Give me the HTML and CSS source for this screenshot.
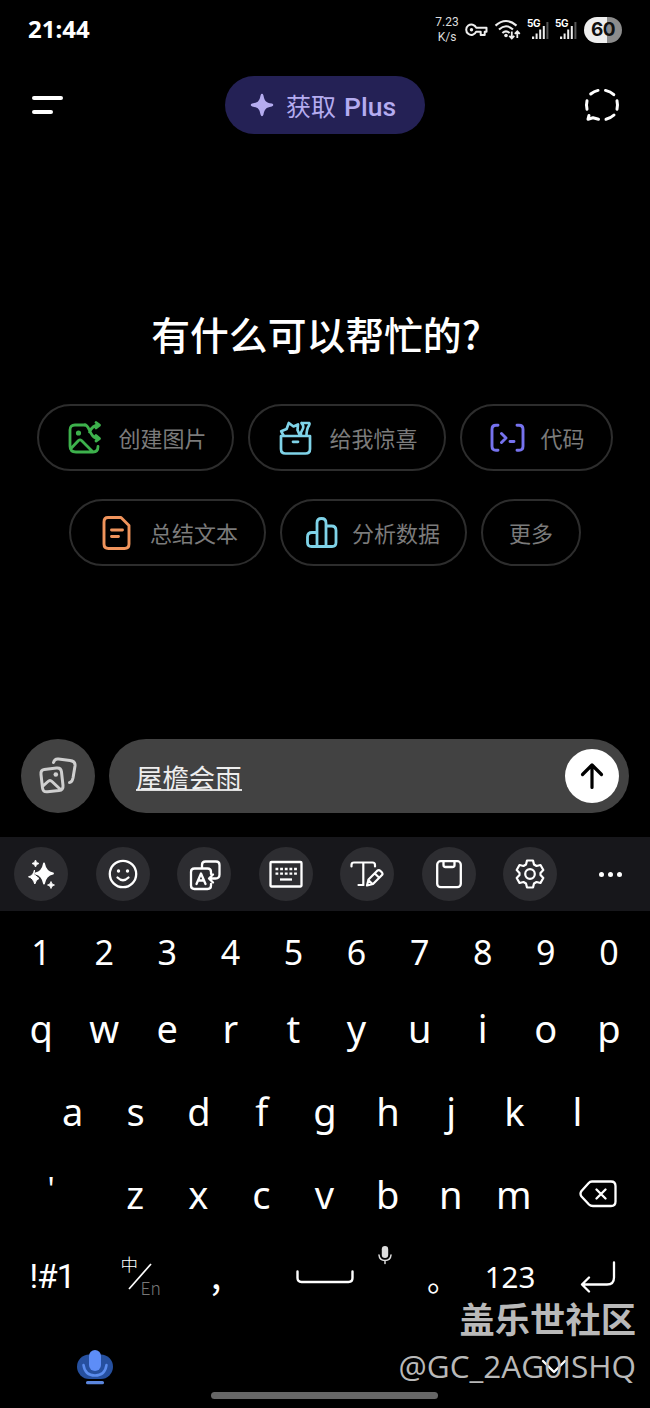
FILE: index.html
```html
<!DOCTYPE html>
<html lang="zh-CN">
<head>
    <meta charset="UTF-8">
    <meta name="viewport" content="width=device-width, initial-scale=1.0">
    <title>有什么可以帮忙的?</title>
    <link rel="stylesheet" href="styles.css">
</head>
<body>
    <!-- status bar -->
    <div class="status">
        <span class="clock">21:44</span>
        <div class="status_icons">
            <div class="speed"><span>7.23</span><span>K/s</span></div>
            <svg class="key_icon" width="24" height="16" viewBox="0 0 24 16" fill="none" stroke="#eee" stroke-width="2" stroke-linejoin="round">
                <path d="M12.2 5.7H22.5V9.7H20.7V13H16.7V9.7H12.2A5.2 5.2 0 1 1 12.2 5.7Z"/>
                <circle cx="7.5" cy="7.7" r="1.7" fill="#eee" stroke="none"/>
            </svg>
            <svg class="wifi" width="27" height="22" viewBox="0 0 27 22" fill="none" stroke="#eee" stroke-width="2.1">
                <path d="M1.5 6.6Q12 -2.6 22.5 6.6M5 10.5Q12 4 19 10.5M8.4 14Q12 10.6 15.6 14"/>
                <circle cx="12" cy="16.5" r="1.8" fill="#eee" stroke="none"/>
                <path stroke-width="1.8" d="M17.8 12.5V19M15.3 16.8L17.8 19.4L20.3 16.8M23.3 19V12.5M20.8 14.9L23.3 12.3L25.8 14.9"/>
            </svg>
            <div class="signal">
                <span>5G</span>
                <svg width="22" height="20" viewBox="0 0 22 20" fill="#eee">
                    <path d="M5 16.5h2.2v2.5H5zM8.6 13.5h2v5.5h-2zM12.2 9.5h2v9.5h-2zM15.8 6h2v13h-2z"/>
                    <path fill="#555" d="M19.4 2h2v17h-2z"/>
                </svg>
            </div>
            <div class="signal">
                <span>5G</span>
                <svg width="22" height="20" viewBox="0 0 22 20" fill="#eee">
                    <path d="M5 16.5h2.2v2.5H5zM8.6 13.5h2v5.5h-2zM12.2 9.5h2v9.5h-2zM15.8 6h2v13h-2z"/>
                    <path fill="#555" d="M19.4 2h2v17h-2z"/>
                </svg>
            </div>
            <div class="battery">60</div>
        </div>
    </div>

    <div class="header">
        <div class="menu"><i></i><i></i></div>
        <div class="plus">
            <svg width="24" height="24" viewBox="0 0 24 24" fill="#b5acf0">
                <path d="M12 .8Q13 .8 13.4 2.2C14.7 8.3 15.7 9.3 21.8 10.6Q23.3 11 23.3 12Q23.3 13 21.8 13.4C15.7 14.7 14.7 15.7 13.4 21.8Q13 23.2 12 23.2Q11 23.2 10.6 21.8C9.3 15.7 8.3 14.7 2.2 13.4Q.7 13 .7 12Q.7 11 2.2 10.6C8.3 9.3 9.3 8.3 10.6 2.2Q11 .8 12 .8Z"/>
            </svg>
            <span class="plus_cn">获取</span><span class="plus_en">Plus</span>
        </div>
        <svg class="temp_chat" width="36" height="34" viewBox="0 0 36 34" fill="none" stroke="#fff" stroke-width="3" stroke-linecap="round" stroke-linejoin="round">
            <path d="M6.7 6Q10 3.2 14 2.4M21.5 2.4Q26.500 3.500 29.800 6.600M33 12.800Q34 17 33 21.200M30 27Q26.500 30.200 22 31.300M3 12.800Q2 17 3 21.200M5 27.500L4 31.200L9 29.800L14.500 31.300"/>
        </svg>
    </div>

    <div class="main">
        <h1>有什么可以帮忙的?</h1>
        <div class="chips">
            <div class="chip">
                <svg width="36" height="36" viewBox="0 0 36 36" fill="none" stroke="#3db14c" stroke-width="2.8" stroke-linecap="round" stroke-linejoin="round">
                    <path d="M18 5H8Q3 5 3 10V26Q3 32 9 32H26Q31 32 31 26.5M3.5 29L11.500 20.500Q13 19.300 14.500 20.500L25.500 31.500"/>
                    <circle cx="11.5" cy="13" r="1.2" fill="#3db14c"/>
                    <path d="M18 5C23 5 22 18.500 32 18.500M22.500 12Q25.500 5 32 5M29 2.500L32.500 5.200L29 8M29 15.500L32.500 18.500L29 21"/>
                </svg>
                <span>创建图片</span>
            </div>
            <div class="chip">
                <svg width="36" height="36" viewBox="0 0 36 36" fill="none" stroke="#7fd3e8" stroke-width="2.7" stroke-linecap="round" stroke-linejoin="round">
                    <path d="M3 16H32V29Q32 33.500 27.500 33.500H7.500Q3 33.500 3 29ZM15 21.800H20"/>
                    <path d="M5.500 15.500L3.200 11.300L8.600 9L10.800 3L15.500 6.500L20 4.500L19.500 10L21.500 14.500M23.500 3H31Q32 3.500 31 5.500Q28.500 9 28.500 15.500M23.500 3Q26.500 6.500 24.500 9.500Q22.500 12 23 15.500"/>
                </svg>
                <span>给我惊喜</span>
            </div>
            <div class="chip">
                <svg width="36" height="36" viewBox="0 0 36 36" fill="none" stroke="#7672ee" stroke-width="2.9" stroke-linecap="round" stroke-linejoin="round">
                    <path d="M8 5.300H6Q2 5.300 2 9.300V26.200Q2 30.200 6 30.200H8M27 5.300H29Q33 5.300 33 9.300V26.200Q33 30.200 29 30.200H27M11.500 13.500L16 18L11.500 22.500M20 21.500H24"/>
                </svg>
                <span>代码</span>
            </div>
        </div>
        <div class="chips">
            <div class="chip">
                <svg width="36" height="36" viewBox="0 0 36 36" fill="none" stroke="#f0945c" stroke-width="2.9" stroke-linecap="round" stroke-linejoin="round">
                    <path d="M9 2.500H22L30 10.500V29Q30 33.500 25.500 33.500H9.500Q5 33.500 5 29V7Q5 2.500 9 2.500ZM12.500 15H23.500M12.500 21.500H19.500"/>
                </svg>
                <span>总结文本</span>
            </div>
            <div class="chip narrow">
                <svg width="36" height="36" viewBox="0 0 36 36" fill="none" stroke="#7fd3e8" stroke-width="2.8" stroke-linejoin="round">
                    <path d="M13 31.500V8Q13 3.500 17.500 3.500Q22 3.500 22 8V31.500M13 17.500H8Q3.500 17.500 3.500 22V27.500Q3.500 31.500 7.500 31.500H28Q32 31.500 32 27.500V15.500Q32 11 27.500 11H22"/>
                </svg>
                <span>分析数据</span>
            </div>
            <div class="chip more"><span>更多</span></div>
        </div>
    </div>

    <div class="composer">
        <div class="photo">
            <svg width="40" height="40" viewBox="0 0 40 40" fill="none" stroke="#cfcfcf" stroke-width="3" stroke-linecap="round" stroke-linejoin="round">
                <path d="M6.200 13.400L18.500 12Q23 11.500 23.500 16L25 29.500Q25.500 34 21 34.500L9.500 35.800Q5 36.300 4.500 31.800L3 18.500Q2.500 13.800 6.200 13.400ZM5 30L10 25.500Q12 23.500 14 25.500L22.500 33.500"/>
                <path d="M15.500 6.500Q16.500 2.500 20.500 3L32 4.500Q37.500 5.200 37 10L35 22Q34 26.500 31.500 26.500"/>
                <circle cx="17.800" cy="18.500" r="2.300" fill="#cfcfcf" stroke="none"/>
            </svg>
        </div>
        <div class="input">
            <span class="typed">屋檐会雨</span>
            <div class="send">
                <svg width="30" height="30" viewBox="0 0 30 30" fill="none" stroke="#000" stroke-width="3.2" stroke-linecap="round" stroke-linejoin="round">
                    <path d="M15 26.500V4M5.500 13.500L15 4L24.500 13.500"/>
                </svg>
            </div>
        </div>
    </div>

    <div class="toolbar">
        <div class="tool">
            <svg width="34" height="34" viewBox="0 0 34 34" fill="#fff">
                <path d="M20 6.500Q21.500 15 29 16.500Q21.500 18 20 26.500Q18.500 18 11.500 16.500Q18.500 15 20 6.500Z" stroke="#fff" stroke-width="1.800" stroke-linejoin="round"/>
                <path d="M10.500 13Q9.500 18.500 4.500 19.800Q9 21 10.800 27Q12 22.500 15 21.500L10 17.500Z" stroke="#fff"/>
                <path d="M11.500 3Q12 6 15 6.500Q12 7 11.500 10Q11 7 8 6.500Q11 6 11.500 3ZM27 24.500Q27.500 27.500 30.500 28Q27.500 28.500 27 31.500Q26.500 28.500 23.500 28Q26.500 27.500 27 24.500Z" stroke="#fff" stroke-width=".8"/>
            </svg>
        </div>
        <div class="tool">
            <svg width="34" height="34" viewBox="0 0 34 34" fill="none" stroke="#fff" stroke-width="2.300" stroke-linecap="round">
                <circle cx="17" cy="17" r="13.200"/>
                <path d="M11.500 20.500Q17 26 22.500 20.500"/>
                <circle cx="12.500" cy="14" r="1.700" fill="#fff" stroke="none"/>
                <circle cx="21.500" cy="14" r="1.700" fill="#fff" stroke="none"/>
            </svg>
        </div>
        <div class="tool">
            <svg width="34" height="34" viewBox="0 0 34 34" fill="none" stroke="#fff" stroke-width="2.300" stroke-linecap="round" stroke-linejoin="round">
                <path d="M24 17V15Q24 11.500 20.500 11.500H7.500Q4 11.500 4 15V28.500Q4 32 7.500 32H20.500Q24 32 24 28.500V27M15 11V8Q15 4.500 18.500 4.500H29Q32.500 4.500 32.500 8V17.500Q32.500 21.500 28.500 21.500H22.500M26 17.500L22 21.500L26 25.500"/>
                <path d="M9.500 27L14 16.500L18.500 27M11 23.500H17"/>
            </svg>
        </div>
        <div class="tool">
            <svg width="34" height="34" viewBox="0 0 34 34" fill="none" stroke="#fff" stroke-width="2.300">
                <rect x="1.500" y="5" width="31" height="24.500" rx="1"/>
                <path d="M6.500 12H28M6.500 16.700H28" stroke-dasharray="2.800 1.850"/>
                <path d="M11 22.500H23"/>
            </svg>
        </div>
        <div class="tool">
            <svg width="34" height="34" viewBox="0 0 34 34" fill="none" stroke="#fff" stroke-width="2.200" stroke-linecap="round" stroke-linejoin="round">
                <path d="M1.500 9.500V8Q1.500 5.500 4 5.500H22.500Q25 5.500 25 8V9.500M13.300 5.500V28M8.500 28H13.500M18.500 22.500L27.500 13.500Q29 12.500 30.500 14L32 15.500Q33 17 32 18L23 27L17 28.500ZM24.800 16.500L29 20.500M18.300 23L22.500 27"/>
            </svg>
        </div>
        <div class="tool">
            <svg width="34" height="34" viewBox="0 0 34 34" fill="none" stroke="#fff" stroke-width="2.300" stroke-linejoin="round">
                <rect x="5.200" y="4.200" width="23.600" height="26" rx="3.500"/>
                <path d="M11.500 4.200V8Q11.500 10 13.500 10H20.500Q22.500 10 22.500 8V4.200"/>
            </svg>
        </div>
        <div class="tool">
            <svg width="34" height="34" viewBox="0 0 34 34" fill="none" stroke="#fff" stroke-width="2.200" stroke-linejoin="round">
                <path d="M14 3.500H20L21 7.500L23.500 9L27.500 8L30.300 13L27.500 16V18L30.300 21L27.500 26L23.500 25L21 26.500L20 30.500H14L13 26.500L10.500 25L6.500 26L3.700 21L6.500 18V16L3.700 13L6.500 8L10.500 9L13 7.500Z"/>
                <circle cx="17" cy="17" r="4.800"/>
            </svg>
        </div>
        <div class="tool dots"><i></i><i></i><i></i></div>
    </div>

    <!-- keyboard -->
    <div class="keyboard">
        <div class="row digits">
            <b>1</b><b>2</b><b>3</b><b>4</b><b>5</b><b>6</b><b>7</b><b>8</b><b>9</b><b>0</b>
        </div>
        <div class="row">
            <b>q</b><b>w</b><b>e</b><b>r</b><b>t</b><b>y</b><b>u</b><b>i</b><b>o</b><b>p</b>
        </div>
        <div class="row tall">
            <b>a</b><b>s</b><b>d</b><b>f</b><b>g</b><b>h</b><b>j</b><b>k</b><b>l</b>
        </div>
        <div class="row third">
            <b class="quote">'</b><b>z</b><b>x</b><b>c</b><b>v</b><b>b</b><b>n</b><b>m</b>
            <b class="del">
                <svg width="38" height="30" viewBox="0 0 38 30" fill="none" stroke="#fff" stroke-width="2.300" stroke-linecap="round" stroke-linejoin="round">
                    <path d="M13 2.500H32Q36.500 2.500 36.500 7V22.500Q36.500 27 32 27H14Q11.500 27 10 25.500L2.500 17.500Q.5 14.800 2.500 12L9.500 4.200Q11 2.500 13 2.500M17.500 10.500L26.500 19.500M26.500 10.500L17.500 19.500"/>
                </svg>
            </b>
        </div>
        <div class="row tall fourth">
            <b class="sym">!#1</b>
            <b class="lang">
                <span class="zh">中</span>
                <svg width="24" height="27" viewBox="0 0 24 27" stroke="#fff" stroke-width="1.700"><path d="M1 26L23 1"/></svg>
                <span class="en">En</span>
            </b>
            <b class="comma">,</b>
            <b class="space">
                <svg width="60" height="18" viewBox="0 0 60 18" fill="none" stroke="#fff" stroke-width="2.400" stroke-linecap="round">
                    <path d="M2.500 3.500V10Q2.500 14 6.500 14H53.500Q57.500 14 57.500 10V3.500"/>
                </svg>
                <svg class="mic_small" width="16" height="20" viewBox="0 0 16 20" fill="none" stroke="#ddd" stroke-width="1.500" stroke-linecap="round">
                    <rect x="4.800" y="1" width="6.400" height="12" rx="3.200" fill="#ddd" stroke="none"/>
                    <path d="M2 10Q2.500 15.500 8 15.500Q13.500 15.500 14 10M8 15.500V18.500"/>
                </svg>
            </b>
            <b class="stop">。</b>
            <b class="num">123</b>
            <b>
                <svg width="38" height="34" viewBox="0 0 38 34" fill="none" stroke="#fff" stroke-width="2.300" stroke-linecap="round" stroke-linejoin="round">
                    <path d="M35 2.500V17.500Q35 24.500 28 24.500H3M10 17.500L3 24.500L10 31.500"/>
                </svg>
            </b>
        </div>
    </div>

    <div class="nav">
        <svg class="mic" width="38" height="36" viewBox="0 0 38 36" fill="none">
            <rect x="1" y="5.500" width="36" height="24.500" rx="12.200" fill="#26509f"/>
            <path d="M7.500 16Q9 26.500 19 26.500Q29 26.500 30.500 16" stroke="#5b8def" stroke-width="2.500" stroke-linecap="round"/>
            <rect x="13" y="1" width="12" height="21" rx="6" fill="#5d8df7"/>
            <rect x="10" y="32" width="18" height="3.300" rx="1.600" fill="#5b86dd"/>
        </svg>
        <svg class="down" width="28" height="18" viewBox="0 0 28 18" fill="none" stroke="#fff" stroke-width="2.400" stroke-linecap="round" stroke-linejoin="round">
            <path d="M3 3L14 14L25 3"/>
        </svg>
    </div>
    <div class="home_bar"></div>

    <div class="watermark">
        <div class="wm_title">盖乐世社区</div>
        <div class="wm_user">@GC_2AG0ISHQ</div>
    </div>
</body>
</html>
```
FILE: styles.css
```css
*{
    padding: 0px;
    margin: 0px;
    box-sizing: border-box;
}
body{
    position: relative;
    width: 650px;
    height: 1408px;
    overflow: hidden;
    background: #000;
    color: #fff;
    font-family: "Noto Sans", "Noto Sans CJK SC", sans-serif;
}
svg{
    display: block;
    flex: none;
}

/* status bar */
.status{
    height: 60px;
    padding: 0 28px;
    display: flex;
    align-items: center;
    justify-content: space-between;
}
.clock{
    font-size: 24px;
    font-weight: 700;
    padding-bottom: 3px;
}
.status_icons{
    display: flex;
    align-items: center;
}
.speed{
    width: 26px;
    font: 12px/15px Roboto, sans-serif;
    text-align: center;
    color: #ddd;
}
.speed span{
    display: block;
}
.key_icon{
    margin-left: 4px;
}
.wifi{
    margin-left: 6px;
}
.signal{
    position: relative;
    width: 22px;
    margin-left: 6px;
}
.signal + .signal{
    margin-left: 6px;
}
.signal span{
    position: absolute;
    left: 0;
    top: -2px;
    font: 700 10px/11px Inter, sans-serif;
    letter-spacing: -.5px;
}
.battery{
    width: 38px;
    height: 26px;
    margin-left: 7px;
    border-radius: 13px;
    background: linear-gradient(90deg, #eee 60%, #8c8c8c 60%);
    color: #111;
    font: 700 19px/26px Inter, sans-serif;
    letter-spacing: -.5px;
    text-align: center;
}

/* header */
.header{
    height: 90px;
    padding: 0 30px 0 32px;
    display: flex;
    align-items: center;
    justify-content: space-between;
}
.menu{
    width: 34px;
}
.menu i{
    display: block;
    width: 31px;
    height: 4px;
    border-radius: 2px;
    background: #fff;
}
.menu i + i{
    width: 21px;
    margin-top: 10px;
}
.plus{
    width: 200px;
    height: 58px;
    padding-left: 25px;
    border-radius: 29px;
    background: #242155;
    color: #b5acf0;
    display: flex;
    align-items: center;
}
.plus_cn{
    margin: 0 8px 0 12px;
    font: 25px/36px "Noto Sans CJK SC", sans-serif;
}
.plus_en{
    font: 500 26.500px/36px Roboto, sans-serif;
    padding-top: 4px;
}

/* greeting and suggestions */
.main{
    height: 589px;
    padding-top: 155px;
}
h1{
    height: 57px;
    margin-bottom: 42px;
    padding-right: 18px;
    text-align: center;
    font: 500 38.800px/57px "Noto Sans CJK SC", sans-serif;
}
.chips{
    display: flex;
    justify-content: center;
    gap: 14px;
    margin-bottom: 28px;
}
.chip{
    height: 67px;
    padding: 0 26px 0 28px;
    border: 2px solid #2d2d2d;
    border-radius: 34px;
    display: flex;
    align-items: center;
    gap: 15px;
    color: #7b7b7b;
    font: 22px/32px "Noto Sans CJK SC", sans-serif;
}
.chip span{
    padding-bottom: 1px;
}
.chip.narrow{
    padding: 0 25px 0 22px;
    gap: 12px;
}
.chip.more{
    padding: 0 26px;
}

/* message field */
.composer{
    height: 98px;
    padding: 0 21px;
    display: flex;
    gap: 14px;
}
.photo{
    width: 74px;
    height: 74px;
    border-radius: 50%;
    background: #424242;
    display: flex;
    align-items: center;
    justify-content: center;
}
.input{
    flex: 1;
    height: 74px;
    padding: 0 10px 0 27px;
    border-radius: 37px;
    background: #424242;
    display: flex;
    align-items: center;
    justify-content: space-between;
}
.typed{
    height: 29px;
    border-bottom: 2px solid #ddd;
    color: #eee;
    font: 26.400px/30px "Noto Sans CJK SC", sans-serif;
}
.send{
    width: 54px;
    height: 54px;
    border-radius: 50%;
    background: #fff;
    display: flex;
    align-items: center;
    justify-content: center;
}

/* keyboard toolbar */
.toolbar{
    height: 74px;
    padding: 0 11px 0 14px;
    background: #17171b;
    display: flex;
    align-items: center;
    justify-content: space-between;
}
.tool{
    width: 54px;
    height: 54px;
    border-radius: 50%;
    background: #2d2d31;
    display: flex;
    align-items: center;
    justify-content: center;
}
.tool.dots{
    background: none;
    gap: 4px;
    padding-right: 2px;
}
.dots i{
    width: 5px;
    height: 5px;
    border-radius: 50%;
    background: #fff;
}

/* keyboard */
.keyboard{
    height: 410px;
}
.row{
    height: 77px;
    padding: 0 9.500px;
    display: flex;
    justify-content: center;
    font-size: 38px;
}
.row b{
    width: 63.100px;
    display: flex;
    align-items: center;
    justify-content: center;
    font-weight: 400;
    line-height: 1;
}
.row.digits{
    height: 78px;
    padding-top: 3px;
    font-size: 34px;
}
.row.tall{
    height: 89px;
}
.row .quote{
    width: 83px;
    margin-right: 11px;
    padding-bottom: 10px;
    font-size: 32px;
}
.row .del{
    width: 84px;
    margin-left: 11px;
}
.fourth{
    display: grid;
    grid-template-columns: 85px 91px 61px 157px 61px 91px 85px;
}
.row.fourth b{
    width: auto;
}
.fourth .sym{
    font: 33.500px/1 Roboto, sans-serif;
    letter-spacing: -1px;
}
.fourth .num{
    font-size: 29.500px;
    padding-top: 1px;
}
.fourth .comma{
    font: 38px/1 "Noto Sans CJK SC", sans-serif;
    padding-bottom: 7px;
}
.fourth .lang{
    position: relative;
}
.lang span{
    position: absolute;
    left: 26px;
    top: 23px;
    font: 300 17.500px/18px "Noto Sans CJK SC", sans-serif;
}
.lang .en{
    left: 46px;
    top: 47px;
    color: #777;
}
.fourth .space{
    position: relative;
}
.mic_small{
    position: absolute;
    right: 11px;
    top: 13px;
}
.fourth .stop{
    font: 32px/1 "Noto Sans CJK SC", sans-serif;
    padding-left: 18px;
}

/* bottom */
.nav{
    height: 71px;
    padding: 21px 82px 0 76px;
    display: flex;
    align-items: center;
    justify-content: space-between;
}
.home_bar{
    width: 227px;
    height: 7px;
    margin-left: 211px;
    border-radius: 4px;
    background: #666;
}
.watermark{
    position: absolute;
    right: 14px;
    top: 1294px;
    text-align: right;
    color: #b9b9b9;
}
.wm_title{
    font: 700 35.300px/48px "Noto Sans CJK SC", sans-serif;
}
.wm_user{
    font: 31.500px/48px "Open Sans", sans-serif;
}
```
